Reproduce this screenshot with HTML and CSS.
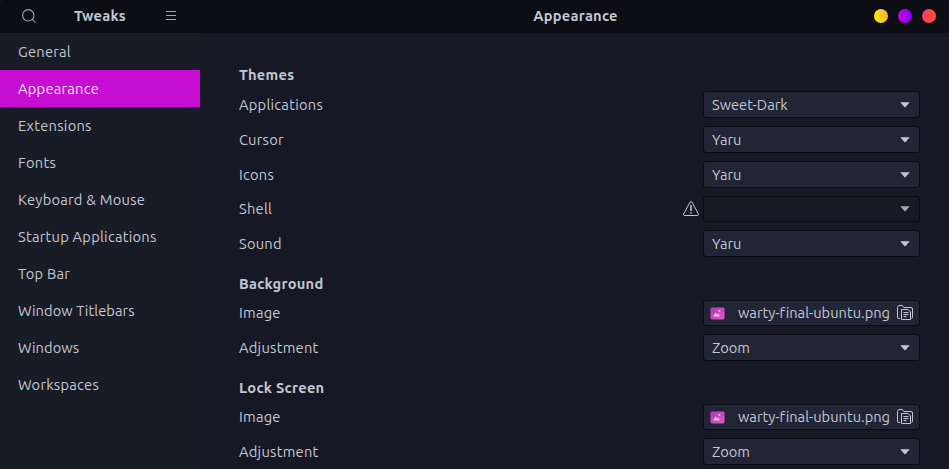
FILE: index.html
```html
<!DOCTYPE html>
<html lang="en">
<head>
<meta charset="utf-8">
<title>Tweaks</title>
<link rel="stylesheet" href="styles.css">
</head>
<body>
<svg class="defs" width="0" height="0" aria-hidden="true">
  <defs>
    <linearGradient id="pink" x1="0" y1="0" x2="1" y2="1"><stop offset="0" stop-color="#a838b0"/><stop offset="1" stop-color="#dc5fc8"/></linearGradient>
    <symbol id="arrow" viewBox="0 0 10 6"><path d="M.3 .3h9.400L5.600 4.900q-.6.6-1.200 0z" fill="currentColor"/></symbol>
    <symbol id="picture" viewBox="0 0 15 13"><rect x=".5" y=".5" width="14" height="12" rx="1.4" fill="url(#pink)" stroke="#8d2b94" stroke-opacity=".5"/><path d="M3 9.500l2.700-4 1.600 2.200 1-1.200 1.700 3z" fill="#f0bdeb"/><rect x="8.500" y="3" width="1.700" height="1.700" fill="#f0bdeb"/></symbol>
    <symbol id="files" viewBox="0 0 16 16"><path d="M3 13.500H2A1.500 1.500 0 0 1 .5 12V2.500Q.5 1 2 .5h3.200l1.600 2H14A1.500 1.500 0 0 1 15.500 4v8a1.500 1.500 0 0 1-1 1.500" fill="none" stroke="currentColor"/><path d="M4.500 4.500h6.500l2.500 2.500v7.500h-9zM6.500 7.500h5M6.500 9.500h5M6.500 11.500h3" fill="none" stroke="currentColor"/></symbol>
  </defs>
</svg>
<div class="window">
  <header class="titlebar">
    <div class="titlebar-left">
      <svg class="search" viewBox="0 0 14 14"><circle cx="6.300" cy="6.300" r="5.700"/><path d="M10.300 10.300l3 3"/></svg>
      <h1 class="title app-title">Tweaks</h1>
      <svg class="menu" viewBox="0 0 10 11"><path d="M0 1.500h10M0 5.500h10M0 9.500h10"/></svg>
    </div>
    <h2 class="title page-title">Appearance</h2>
    <div class="controls"><i class="dot minimize"></i><i class="dot maximize"></i><i class="dot close"></i></div>
  </header>
  <div class="body">
    <nav class="sidebar">
      <a class="item">General</a>
      <a class="item active">Appearance</a>
      <a class="item">Extensions</a>
      <a class="item">Fonts</a>
      <a class="item">Keyboard &amp; Mouse</a>
      <a class="item">Startup Applications</a>
      <a class="item">Top Bar</a>
      <a class="item tight">Window Titlebars</a>
      <a class="item tight">Windows</a>
      <a class="item">Workspaces</a>
    </nav>
    <main class="content">
      <h3 class="heading">Themes</h3>
      <div class="row"><span>Applications</span><div class="combo"><span>Sweet-Dark</span><svg class="arrow"><use href="#arrow"/></svg></div></div>
      <div class="row"><span>Cursor</span><div class="combo"><span>Yaru</span><svg class="arrow"><use href="#arrow"/></svg></div></div>
      <div class="row"><span>Icons</span><div class="combo"><span>Yaru</span><svg class="arrow"><use href="#arrow"/></svg></div></div>
      <div class="row short"><span class="grow">Shell</span><svg class="warning" viewBox="0 0 16 15"><path d="M7 1.200Q8 0 9 1.200L15.400 13q.3 1.500-.9 1.500h-13Q.3 14.500.6 13z"/><path class="mark" d="M8 4v6M8 11.300v1.500"/></svg><div class="combo disabled"><svg class="arrow"><use href="#arrow"/></svg></div></div>
      <div class="row"><span>Sound</span><div class="combo"><span>Yaru</span><svg class="arrow"><use href="#arrow"/></svg></div></div>
      <h3 class="heading">Background</h3>
      <div class="row short"><span>Image</span><div class="combo file"><svg class="picture"><use href="#picture"/></svg><span class="filename">warty-final-ubuntu.png</span><svg class="files"><use href="#files"/></svg></div></div>
      <div class="row"><span>Adjustment</span><div class="combo"><span>Zoom</span><svg class="arrow"><use href="#arrow"/></svg></div></div>
      <h3 class="heading">Lock Screen</h3>
      <div class="row short"><span>Image</span><div class="combo file"><svg class="picture"><use href="#picture"/></svg><span class="filename">warty-final-ubuntu.png</span><svg class="files"><use href="#files"/></svg></div></div>
      <div class="row"><span>Adjustment</span><div class="combo"><span>Zoom</span><svg class="arrow"><use href="#arrow"/></svg></div></div>
    </main>
  </div>
</div>
</body>
</html>
```
FILE: styles.css
```css
* { box-sizing: border-box; }
body {
  margin: 0;
  background: #161925;
  color: #c3c7d1;
  font: 14.667px/20px Ubuntu, "Noto Sans", sans-serif;
  letter-spacing: 0.25px;
  font-variant-ligatures: none;
  overflow: hidden;
}
h1, h2, h3 { margin: 0; font-size: 14.667px; font-weight: 700; }
svg { display: block; flex: none; }
.defs { position: absolute; }
.window { height: 469px; display: flex; flex-direction: column; }
.titlebar {
  height: 33px;
  flex: none;
  display: flex;
  align-items: center;
  background: #0c0e14;
  border-top-left-radius: 4px;
}
.titlebar-left { width: 200px; display: flex; align-items: center; padding: 0 24px 2px 22px; }
.title { line-height: 20px; white-space: nowrap; }
.app-title { flex: 1; padding-right: 2px; text-align: center; }
.search { width: 14px; height: 14px; fill: none; stroke: #a3a6ad; stroke-width: 1.1; }
.menu { width: 10px; height: 11px; fill: none; stroke: #a3a6ad; }
.page-title { flex: 1; padding: 0 0 2px 77px; text-align: center; }
.controls { display: flex; gap: 10px; padding: 0 13px 1px 0; }
.dot { width: 14px; height: 14px; border-radius: 50%; }
.minimize { background: linear-gradient(90deg, #f8f000, #ffad3a); }
.maximize { background: linear-gradient(90deg, #d000dc, #7b00ff); }
.close { background: linear-gradient(90deg, #ff3c68, #ff5028); }
.body { flex: 1; min-height: 0; display: flex; }
.sidebar { width: 200px; flex: none; background: #181c27; }
.item {
  display: block;
  height: 37px;
  padding: 9px 18px 7px;
  border-bottom: 1px solid #161a24;
  white-space: nowrap;
}
.item.active { background: #c50ed2; color: #f6e3f8; border-color: #c50ed2; }
.item.tight { letter-spacing: 0.08px; }
.content { flex: 1; padding: 33px 29px 0 39px; }
.heading { height: 18px; margin: 18px 0 7px; line-height: 18px; }
.heading:first-child { margin-top: 0; }
.row { height: 27px; margin-bottom: 8px; display: flex; align-items: center; justify-content: space-between; }
.row.short { height: 26px; }
.grow { flex: 1; }
.combo {
  width: 217px;
  height: 100%;
  display: flex;
  align-items: center;
  justify-content: space-between;
  padding: 0 9px 0 8px;
  border: 1px solid #0a0c12;
  border-radius: 3px;
  background: #222535;
  letter-spacing: 0;
}
.disabled { justify-content: flex-end; background: #171a25; color: #a5a8b2; }
.arrow { width: 10px; height: 6px; }
.warning { width: 16px; height: 15px; margin: -1px 4px 0 0; fill: none; stroke: #c3c7d1; }
.warning .mark { stroke-width: 1.5; }
.file { padding: 0 6px; }
.picture { width: 15px; height: 13px; }
.filename {
  flex: 1;
  margin-right: 3px;
  padding-left: 13px;
  border-right: 1px solid #1f2230;
  white-space: nowrap;
}
.files { width: 16px; height: 16px; }
```
